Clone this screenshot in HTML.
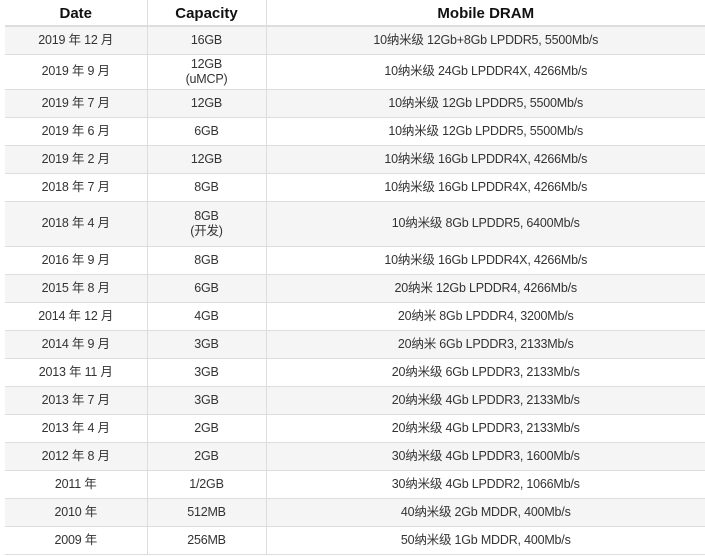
<!DOCTYPE html>
<html><head><meta charset="utf-8"><style>
html,body{margin:0;padding:0;background:#fff;width:705px;height:556px;overflow:hidden}
table{position:absolute;left:5px;top:0;width:700px;border-collapse:collapse;font-family:"Liberation Sans","Noto Sans CJK SC",sans-serif;font-size:12.5px;color:#333;letter-spacing:-0.2px}
td,th{text-align:center;padding:0;border-bottom:1px solid #ddd;line-height:15px;box-sizing:border-box}
td:nth-child(1),th:nth-child(1){width:142px;border-right:1px solid #ddd}
td:nth-child(2),th:nth-child(2){width:119px;border-right:1px solid #ddd}
th{font-size:15px;font-weight:bold;color:#111;height:26px;line-height:18px;padding-top:5px;border-bottom:2px solid #ddd;vertical-align:top;letter-spacing:0}
tr.g td{background:#f5f5f5}
tr td{height:28px}
</style></head><body>
<table>
<tr><th>Date</th><th>Capacity</th><th>Mobile DRAM</th></tr>
<tr class="g"><td>2019 年 12 月</td><td>16GB</td><td>10纳米级 12Gb+8Gb LPDDR5, 5500Mb/s</td></tr>
<tr><td style="height:35px">2019 年 9 月</td><td>12GB<br>(uMCP)</td><td>10纳米级 24Gb LPDDR4X, 4266Mb/s</td></tr>
<tr class="g"><td>2019 年 7 月</td><td>12GB</td><td>10纳米级 12Gb LPDDR5, 5500Mb/s</td></tr>
<tr><td>2019 年 6 月</td><td>6GB</td><td>10纳米级 12Gb LPDDR5, 5500Mb/s</td></tr>
<tr class="g"><td>2019 年 2 月</td><td>12GB</td><td>10纳米级 16Gb LPDDR4X, 4266Mb/s</td></tr>
<tr><td>2018 年 7 月</td><td>8GB</td><td>10纳米级 16Gb LPDDR4X, 4266Mb/s</td></tr>
<tr class="g"><td style="height:45px">2018 年 4 月</td><td>8GB<br>(开发)</td><td>10纳米级 8Gb LPDDR5, 6400Mb/s</td></tr>
<tr><td>2016 年 9 月</td><td>8GB</td><td>10纳米级 16Gb LPDDR4X, 4266Mb/s</td></tr>
<tr class="g"><td>2015 年 8 月</td><td>6GB</td><td>20纳米 12Gb LPDDR4, 4266Mb/s</td></tr>
<tr><td>2014 年 12 月</td><td>4GB</td><td>20纳米 8Gb LPDDR4, 3200Mb/s</td></tr>
<tr class="g"><td>2014 年 9 月</td><td>3GB</td><td>20纳米 6Gb LPDDR3, 2133Mb/s</td></tr>
<tr><td>2013 年 11 月</td><td>3GB</td><td>20纳米级 6Gb LPDDR3, 2133Mb/s</td></tr>
<tr class="g"><td>2013 年 7 月</td><td>3GB</td><td>20纳米级 4Gb LPDDR3, 2133Mb/s</td></tr>
<tr><td>2013 年 4 月</td><td>2GB</td><td>20纳米级 4Gb LPDDR3, 2133Mb/s</td></tr>
<tr class="g"><td>2012 年 8 月</td><td>2GB</td><td>30纳米级 4Gb LPDDR3, 1600Mb/s</td></tr>
<tr><td>2011 年</td><td>1/2GB</td><td>30纳米级 4Gb LPDDR2, 1066Mb/s</td></tr>
<tr class="g"><td>2010 年</td><td>512MB</td><td>40纳米级 2Gb MDDR, 400Mb/s</td></tr>
<tr><td>2009 年</td><td>256MB</td><td>50纳米级 1Gb MDDR, 400Mb/s</td></tr>
</table>
</body></html>
